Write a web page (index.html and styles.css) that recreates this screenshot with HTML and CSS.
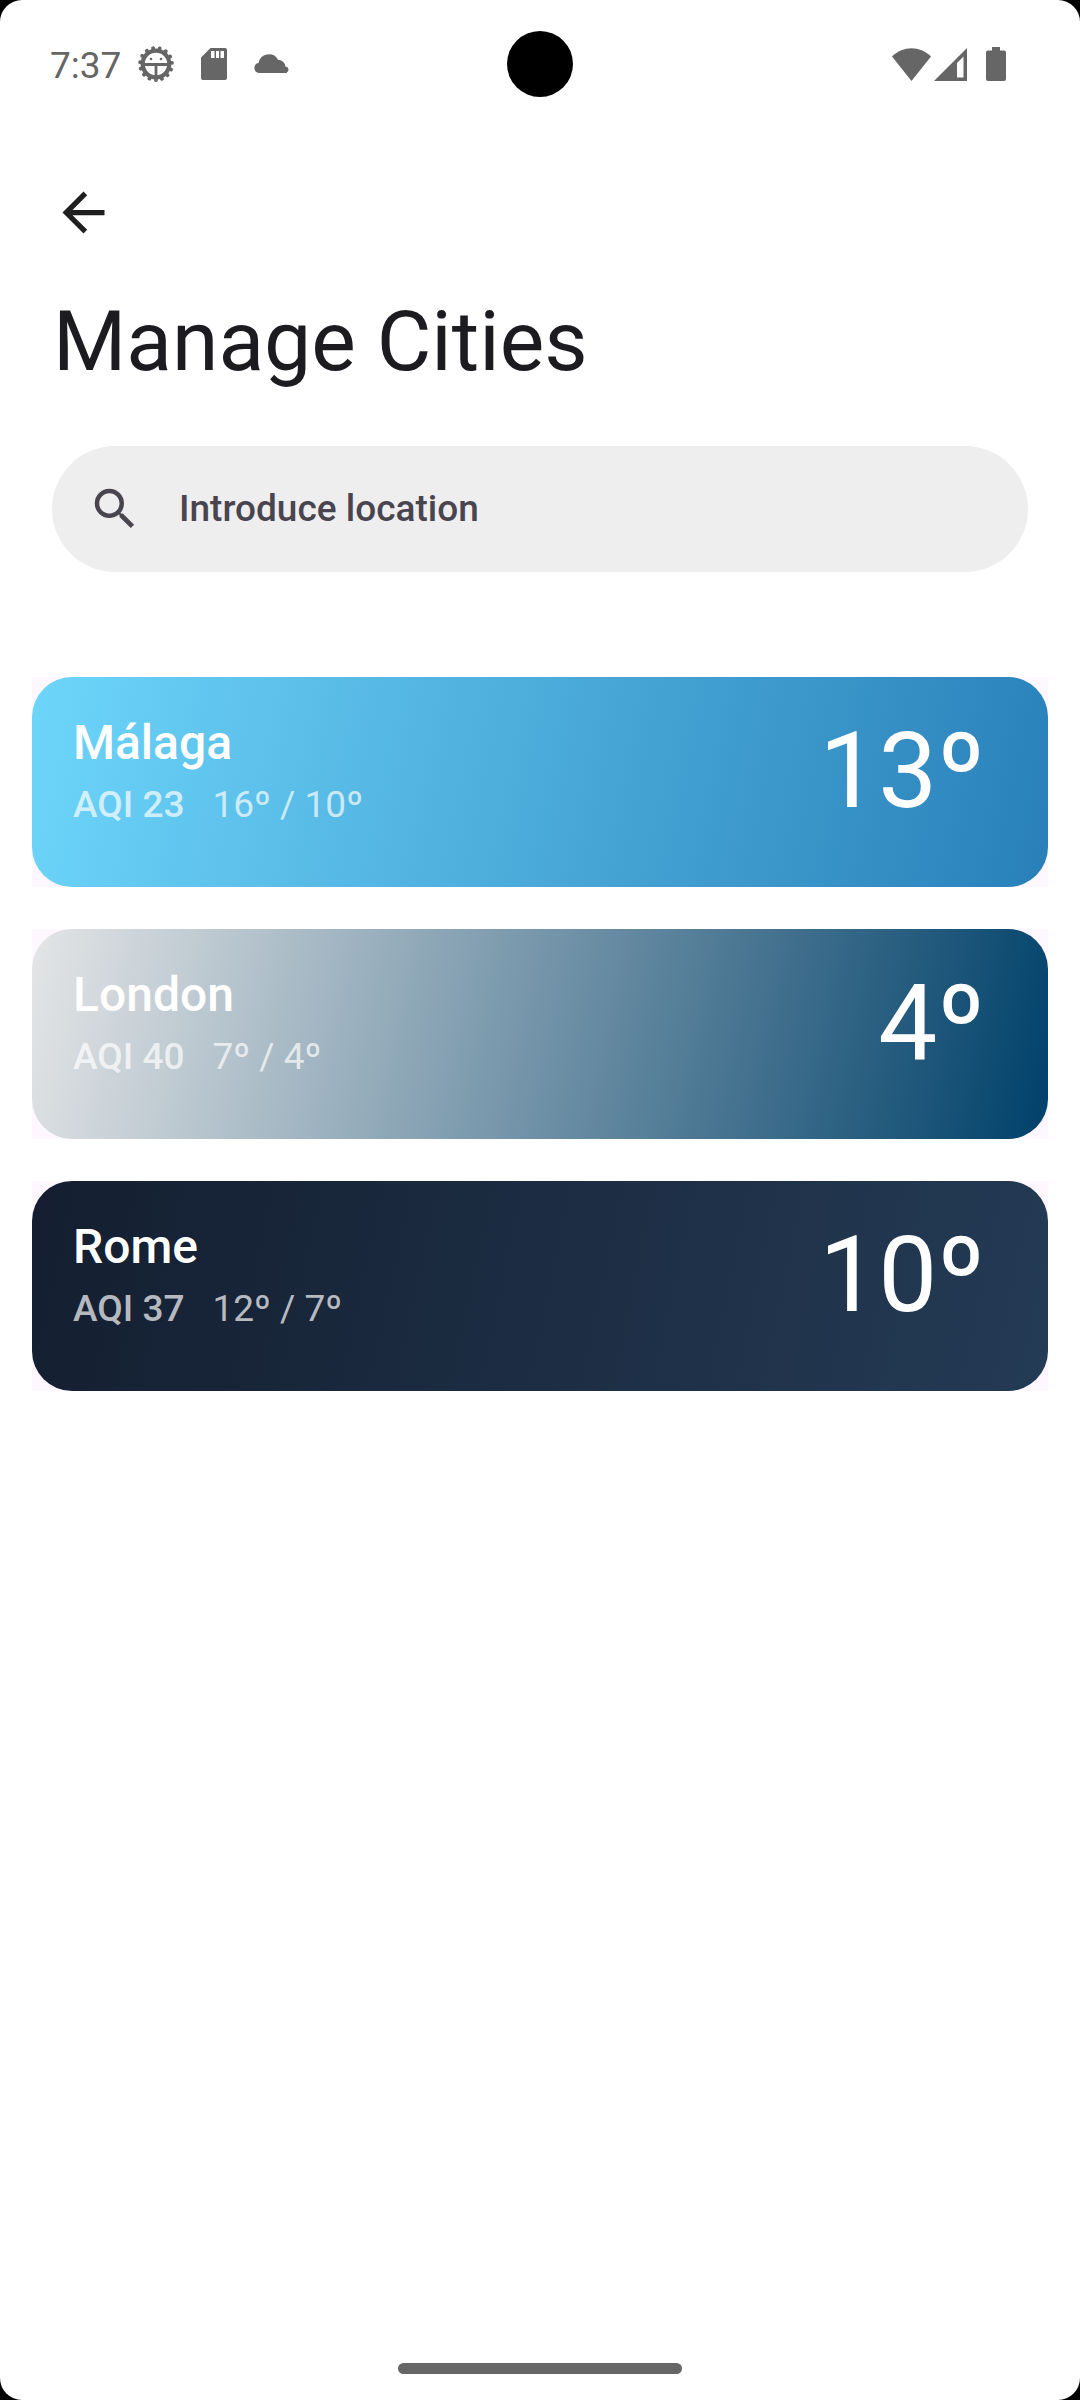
FILE: index.html
```html
<!DOCTYPE html>
<html lang="en">
<head>
<meta charset="utf-8">
<meta name="viewport" content="width=device-width, initial-scale=1">
<title>Manage Cities</title>
<link rel="stylesheet" href="styles.css">
</head>
<body>
<div class="screen">
  <div class="status-bar">
    <div class="status-left">
      <span class="clock">7:37</span>
      <svg class="status-icon" viewBox="0 0 36 36" aria-hidden="true">
        <circle cx="18" cy="18" r="13.300" fill="none" stroke="currentColor" stroke-width="4.200"/>
        <circle cx="18" cy="18" r="16" fill="none" stroke="currentColor" stroke-width="3.800" stroke-linecap="round" stroke-dasharray="0.1 6.602" transform="rotate(90 18 18)"/>
        <path d="M6 18.500h24M18 18.500v12" stroke="currentColor" stroke-width="2.800"/>
        <circle cx="13" cy="13" r="1.300" fill="currentColor"/>
        <circle cx="23" cy="13" r="1.300" fill="currentColor"/>
      </svg>
      <svg class="status-icon sd" viewBox="0 0 26 32" aria-hidden="true">
        <path fill="currentColor" fill-rule="evenodd" d="M9.500 0H24a2 2 0 0 1 2 2v28a2 2 0 0 1-2 2H2a2 2 0 0 1-2-2V9.500zM10 3v7h3.500V3zM15 3v7h3V3zM19.500 3v7H23V3z"/>
      </svg>
      <svg class="status-icon" viewBox="0 0 36 36" aria-hidden="true">
        <path fill="currentColor" d="M5 27a5 5 0 0 1-.5-9.900A10.500 10.500 0 0 1 24 13.700a7.500 7.500 0 0 1 7.500 6.800A3.400 3.400 0 0 1 32.500 27z"/>
      </svg>
    </div>
    <div class="camera"></div>
    <div class="status-right">
      <svg class="wifi" viewBox="0 0 39 33" aria-hidden="true"><path fill="currentColor" d="M0 8.500C11-2.500 28-2.500 39 8.500L19.500 33z"/></svg>
      <svg class="signal" viewBox="0 0 33 33" aria-hidden="true"><path fill="currentColor" fill-rule="evenodd" d="M33 0v33H0zM29.500 8.500L23 15v14.500h6.500z"/></svg>
      <svg class="battery" viewBox="0 0 20 34" aria-hidden="true"><path fill="currentColor" d="M6 0h8v3.500h4a2 2 0 0 1 2 2V32a2 2 0 0 1-2 2H2a2 2 0 0 1-2-2V5.500a2 2 0 0 1 2-2h4z"/></svg>
    </div>
  </div>

  <header class="header">
    <button class="back" type="button" aria-label="Back">
      <svg viewBox="0 0 24 24" aria-hidden="true"><path fill="currentColor" d="M20 11H7.830l5.590-5.590L12 4l-8 8 8 8 1.410-1.410L7.830 13H20v-2z"/></svg>
    </button>
    <h1 class="title">Manage Cities</h1>
    <label class="search">
      <svg viewBox="0 0 24 24" aria-hidden="true"><path fill="currentColor" d="M15.500 14h-.79l-.28-.27A6.471 6.471 0 0 0 16 9.500 6.500 6.500 0 1 0 9.500 16c1.610 0 3.090-.59 4.230-1.570l.27.28v.79l5 4.990L20.490 19l-4.990-5zm-6 0C7.010 14 5 11.990 5 9.500S7.010 5 9.500 5 14 7.010 14 9.500 11.990 14 9.500 14z"/></svg>
      <input class="search-input" type="text" placeholder="Introduce location" aria-label="Introduce location">
    </label>
  </header>

  <main class="cities">
    <article class="card-frame">
      <div class="card clear">
        <div>
          <h2 class="city">Málaga</h2>
          <p class="details"><span class="aqi">AQI 23</span><span>16º / 10º</span></p>
        </div>
        <div class="temp">13º</div>
      </div>
    </article>
    <article class="card-frame">
      <div class="card cloudy">
        <div>
          <h2 class="city">London</h2>
          <p class="details"><span class="aqi">AQI 40</span><span>7º / 4º</span></p>
        </div>
        <div class="temp">4º</div>
      </div>
    </article>
    <article class="card-frame">
      <div class="card night">
        <div>
          <h2 class="city">Rome</h2>
          <p class="details"><span class="aqi">AQI 37</span><span>12º / 7º</span></p>
        </div>
        <div class="temp">10º</div>
      </div>
    </article>
  </main>

  <div class="nav-handle"></div>
</div>
</body>
</html>
```
FILE: styles.css
```css
* {
  box-sizing: border-box;
}

body {
  margin: 0;
  background: #000;
  font-family: Roboto, sans-serif;
  color: #1c1b1f;
}

svg {
  display: block;
  flex: none;
}

h1,
h2,
p {
  margin: 0;
}

.screen {
  display: flex;
  flex-direction: column;
  min-height: 100vh;
  border-radius: 22px;
  background: #fff;
}

/* Status bar */
.status-bar {
  display: grid;
  grid-template-columns: 1fr auto 1fr;
  align-items: center;
  height: 128px;
  color: #666;
}

.status-left,
.status-right {
  display: flex;
  align-items: center;
}

.status-left {
  gap: 27px;
  padding-left: 50px;
}

.clock {
  margin-right: -10px;
  padding-top: 4px;
  font-size: 37px;
  line-height: 44px;
}

.status-icon {
  width: 36px;
  height: 36px;
}

.status-icon.sd {
  width: 26px;
  height: 32px;
}

.camera {
  width: 66px;
  height: 66px;
  border-radius: 50%;
  background: #000;
}

.status-right {
  justify-content: flex-end;
  padding-right: 74px;
}

.wifi {
  width: 39px;
  height: 33px;
  margin-right: 3px;
}

.signal {
  width: 33px;
  height: 33px;
  margin-right: 19px;
}

.battery {
  width: 20px;
  height: 34px;
}

/* Header */
.header {
  padding: 53px 52px 0;
}

.back {
  display: block;
  padding: 0;
  border: 0;
  background: none;
  color: #1f1f1f;
}

.back svg {
  width: 63px;
  height: 63px;
}

.title {
  margin-top: 44px;
  padding-left: 1px;
  font-size: 84px;
  font-weight: 400;
  line-height: 108px;
}

.search {
  display: flex;
  align-items: center;
  gap: 37px;
  height: 126px;
  margin-top: 50px;
  padding: 0 32px 0 36px;
  border-radius: 63px;
  background: #eee;
  color: #49454f;
}

.search svg {
  width: 54px;
  height: 54px;
}

.search-input {
  flex: 1;
  min-width: 0;
  padding: 0;
  border: 0;
  outline: 0;
  background: none;
  color: inherit;
  font: 500 37px/52px Roboto, sans-serif;
}

.search-input::placeholder {
  color: inherit;
  opacity: 1;
}

/* City cards */
.cities {
  display: grid;
  gap: 42px;
  padding: 105px 32px 0;
}

.card-frame {
  background: #fef7ff;
}

.card {
  display: flex;
  justify-content: space-between;
  min-height: 210px;
  padding: 32px 63px 32px 41px;
  border-radius: 40px;
  color: #fff;
}

.clear {
  background: linear-gradient(102deg, #6dd5fa, #2980b9);
}

.cloudy {
  background: linear-gradient(102deg, #e4e5e6, #00416a);
}

.night {
  background: linear-gradient(102deg, #141e30, #243b55);
}

.city {
  font-size: 48px;
  font-weight: 500;
  line-height: 68px;
}

.details {
  display: flex;
  gap: 28px;
  font-size: 37px;
  line-height: 56px;
  color: rgba(255, 255, 255, 0.7);
}

.aqi {
  font-weight: 500;
}

.temp {
  font-size: 105px;
  line-height: 126px;
}

/* Gesture handle */
.nav-handle {
  width: 284px;
  height: 11px;
  margin: auto auto 26px;
  border-radius: 6px;
  background: #666;
}
```
